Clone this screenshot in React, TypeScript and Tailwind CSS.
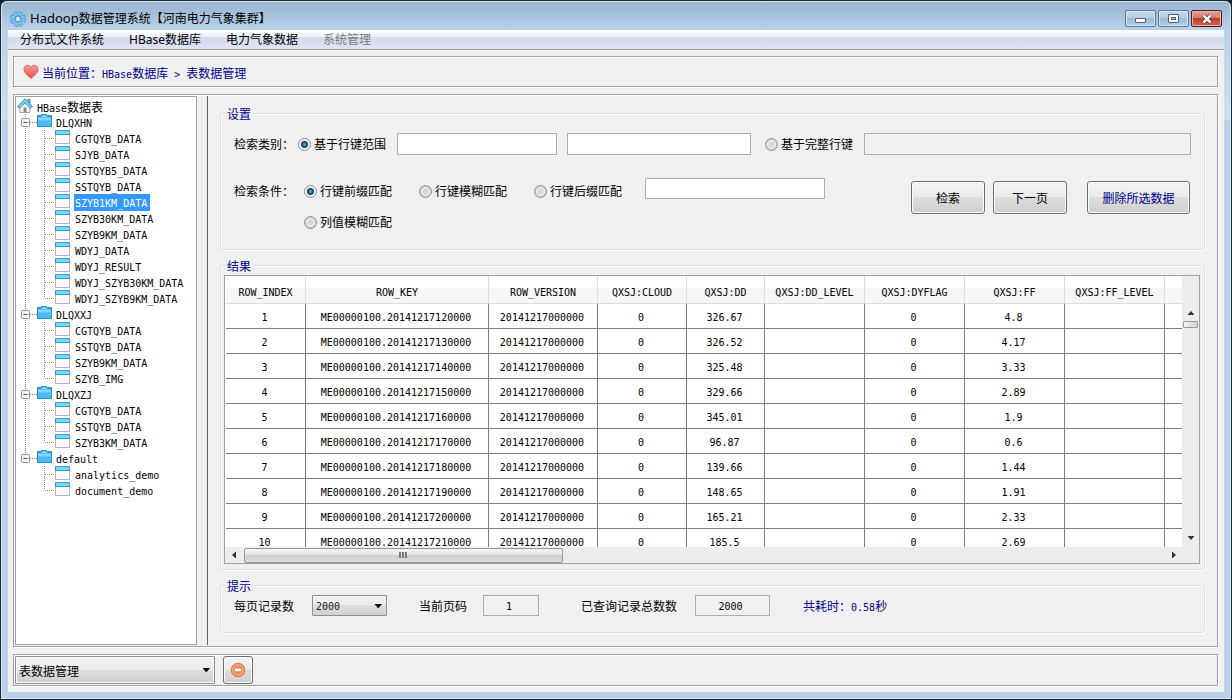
import React, { useState } from "react";

const CJK = "font-['Liberation_Sans','Noto_Sans_CJK_SC',sans-serif]";

function Mono({ children }: { children: React.ReactNode }) {
  return <span className="font-['DejaVu_Sans_Mono',monospace] text-[10px]">{children}</span>;
}

function GearIcon() {
  return (
    <svg width="16" height="16" viewBox="0 0 16 16" aria-hidden="true">
      <circle cx="8" cy="8" r="6.4" fill="none" stroke="#3d93cb" strokeWidth="3" strokeDasharray="3.2 1.83" />
      <circle cx="8" cy="8" r="5.8" fill="#7cc8ee" stroke="#3d93cb" strokeWidth="0.8" />
      <circle cx="8" cy="8" r="6" fill="none" stroke="#7cc8ee" strokeWidth="2.4" strokeDasharray="2.2 2.51" strokeDashoffset="-0.4" />
      <circle cx="8" cy="8" r="3.2" fill="#a9c3de" stroke="#2f86c2" strokeWidth="1" />
      <circle cx="8" cy="8" r="2" fill="#c9e4f5" />
    </svg>
  );
}

function HeartIcon() {
  return (
    <svg width="16" height="16" viewBox="0 0 16 16" aria-hidden="true">
      <defs>
        <linearGradient id="heart" x1="0" y1="0" x2="0" y2="1">
          <stop offset="0" stopColor="#fb9a94" />
          <stop offset="1" stopColor="#f04a4e" />
        </linearGradient>
      </defs>
      <path
        d="M8 14.6C6.6 12.4 1 9.8 1 5.2C1 2.8 2.7 1.3 4.6 1.3C6.2 1.3 7.4 2.2 8 3.5C8.6 2.2 9.8 1.3 11.4 1.3C13.3 1.3 15 2.8 15 5.2C15 9.8 9.4 12.4 8 14.6Z"
        fill="url(#heart)"
        stroke="#c4605e"
        strokeWidth="0.9"
      />
    </svg>
  );
}

function HouseIcon() {
  return (
    <svg width="16" height="16" viewBox="0 0 16 16" aria-hidden="true">
      <path d="M3 8V14.5H13V8L8 3Z" fill="#f4f4f4" stroke="#a8a8a8" strokeWidth="1" />
      <rect x="6.5" y="9.5" width="3" height="5" fill="#8b8f93" />
      <rect x="11" y="1.5" width="2" height="4" fill="#63bde8" stroke="#2b7fae" strokeWidth="0.7" />
      <path d="M8 0.8L15.4 8.4L13.6 10.2L8 4.8L2.4 10.2L0.6 8.4Z" fill="#7fd0f5" stroke="#2b7fae" strokeWidth="0.9" />
    </svg>
  );
}

function FolderIcon() {
  return (
    <svg width="15" height="14" viewBox="0 0 15 14" aria-hidden="true">
      <path d="M0.5 1.5H4.5V0.5H9.5L10.5 1.5H14.5V12.5H0.5Z" fill="#2f9fdc" stroke="#2a90cc" />
      <path d="M5 1.4H9.3L10.2 3H5Z" fill="#8fdcff" />
      <rect x="1" y="3.4" width="13" height="8.6" fill="#4fbaf2" />
      <rect x="1" y="3.4" width="13" height="3" fill="#7fd3fb" />
    </svg>
  );
}

function TableIcon() {
  return (
    <svg width="15" height="15" viewBox="0 0 15 15" aria-hidden="true">
      <rect x="0.5" y="0.5" width="14" height="13" fill="#fdfdfd" stroke="#b4b4b4" />
      <rect x="0" y="0" width="15" height="5" fill="#3a9fd0" />
      <rect x="1" y="1" width="13" height="3" fill="#7fd4fa" />
    </svg>
  );
}

const dotted = { stroke: "#8a8a8a", strokeDasharray: "1 1", fill: "none" };

function GroupBranch({ last }: { last: boolean }) {
  return (
    <svg width="21" height="16" viewBox="0 0 21 16" aria-hidden="true">
      <path d={last ? "M9.5 0V5" : "M9.5 0V16"} {...dotted} />
      <path d="M14 8.5H21" {...dotted} />
      <rect x="5.5" y="4.5" width="8" height="8" rx="1" fill="#f4f4f4" stroke="#919191" />
      <path d="M7.5 8.5H11.5" stroke="#3f4fa0" />
    </svg>
  );
}

function LeafBranch({ trunk, last }: { trunk: boolean; last: boolean }) {
  return (
    <svg width="39" height="16" viewBox="0 0 39 16" aria-hidden="true">
      {trunk && <path d="M9.5 0V16" {...dotted} />}
      <path d={last ? "M28.5 0V8" : "M28.5 0V16"} {...dotted} />
      <path d="M29 8.5H39" {...dotted} />
    </svg>
  );
}

const groups = [
  {
    name: "DLQXHN",
    tables: [
      "CGTQYB_DATA",
      "SJYB_DATA",
      "SSTQYB5_DATA",
      "SSTQYB_DATA",
      "SZYB1KM_DATA",
      "SZYB30KM_DATA",
      "SZYB9KM_DATA",
      "WDYJ_DATA",
      "WDYJ_RESULT",
      "WDYJ_SZYB30KM_DATA",
      "WDYJ_SZYB9KM_DATA",
    ],
  },
  { name: "DLQXXJ", tables: ["CGTQYB_DATA", "SSTQYB_DATA", "SZYB9KM_DATA", "SZYB_IMG"] },
  { name: "DLQXZJ", tables: ["CGTQYB_DATA", "SSTQYB_DATA", "SZYB3KM_DATA"] },
  { name: "default", tables: ["analytics_demo", "document_demo"] },
];

function Tree() {
  const [selected, setSelected] = useState("DLQXHN/SZYB1KM_DATA");
  return (
    <nav className="w-[182px] shrink-0 overflow-hidden border border-[#a0a0a0] bg-white pt-px text-xs text-black">
      <div className="flex h-4 items-start pl-px">
        <HouseIcon />
        <span className="ml-1 pt-0.5 leading-4">
          <Mono>HBase</Mono>数据表
        </span>
      </div>
      <ul>
        {groups.map((g, gi) => {
          const lastGroup = gi === groups.length - 1;
          return (
            <li key={g.name}>
              <div className="flex h-4 items-start">
                <GroupBranch last={lastGroup} />
                <FolderIcon />
                <span className="ml-1 pt-px leading-4">
                  <Mono>{g.name}</Mono>
                </span>
              </div>
              <ul>
                {g.tables.map((t, ti) => {
                  const id = g.name + "/" + t;
                  return (
                    <li key={t} className="flex h-4 items-start">
                      <LeafBranch trunk={!lastGroup} last={ti === g.tables.length - 1} />
                      <TableIcon />
                      <button
                        type="button"
                        onClick={() => setSelected(id)}
                        className={
                          id === selected
                            ? "ml-1 bg-[#3399ff] pt-0.5 pr-[3px] pl-px leading-[14px] text-white"
                            : "ml-1 pt-0.5 pr-[3px] pl-px leading-[14px]"
                        }
                      >
                        <Mono>{t}</Mono>
                      </button>
                    </li>
                  );
                })}
              </ul>
            </li>
          );
        })}
      </ul>
    </nav>
  );
}

function Radio({ name, label, checked }: { name: string; label: string; checked?: boolean }) {
  return (
    <label className="flex h-4 items-center gap-[3px] whitespace-nowrap">
      <input
        type="radio"
        name={name}
        defaultChecked={checked}
        className="size-[13px] shrink-0 appearance-none rounded-full border border-[#8e8f8f] bg-[radial-gradient(circle,#d4d6d9_0_2px,#eceded_4px,#c4c8cc_5px,#f4f4f4_6px)] checked:bg-[radial-gradient(circle,#6fb4d6_0,#25648a_2px,#123f5e_3px,#e6eaee_4px,#f4f4f4_6px)]"
      />
      <span className="pt-0.5">{label}</span>
    </label>
  );
}

const button =
  "h-[33px] rounded-[3px] border border-[#707070] bg-[linear-gradient(#f3f3f3,#ebebeb_50%,#dddddd_50%,#cfcfcf)] pt-0.5 text-center shadow-[inset_0_0_0_1px_#fbfbfb]";
const field = "border border-[#abadb3] bg-white px-1 outline-none";
const group =
  "min-w-0 rounded-[3px] border border-[#d5dfe5] px-[13px] shadow-[inset_1px_1px_0_#fff,1px_1px_0_#fff]";
const legend = "bg-[#f0f0f0] pt-[3px] pr-0.5 pl-px leading-[12px] text-[#00008b]";
const panel = "border border-[#a0a0a0] shadow-[inset_1px_1px_0_#fff,1px_1px_0_#fff]";

function SearchGroup() {
  return (
    <fieldset className={group + " h-36 shrink-0"}>
      <legend className={legend + " -ml-2"}>设置</legend>
      <div className="mt-3 flex items-center">
        <span className="mr-1 w-15 shrink-0 pt-0.5 whitespace-nowrap">检索类别：</span>
        <Radio name="category" label="基于行键范围" checked />
        <input aria-label="起始行键" className={field + " ml-[11px] h-[22px] w-40"} />
        <input aria-label="结束行键" className={field + " mr-3.5 ml-2.5 h-[22px] w-46"} />
        <Radio name="category" label="基于完整行键" />
        <input
          aria-label="完整行键"
          disabled
          className="ml-[11px] h-[22px] min-w-0 flex-1 border border-[#abadb3] bg-[#f0f0f0] px-1"
        />
      </div>
      <div className="mt-[23px] flex items-start">
        <span className="mt-[5px] mr-2.5 w-15 shrink-0 pt-px leading-4 whitespace-nowrap">检索条件：</span>
        <div className="mt-[5px] grid grid-cols-[115px_115px_auto] gap-y-[15px]">
          <Radio name="condition" label="行键前缀匹配" checked />
          <Radio name="condition" label="行键模糊匹配" />
          <Radio name="condition" label="行键后缀匹配" />
          <Radio name="condition" label="列值模糊匹配" />
        </div>
        <input aria-label="匹配内容" className={field + " ml-[23px] h-[21px] w-45"} />
        <div className="mt-[3px] mr-px ml-auto flex">
          <button type="button" className={button + " w-[74px]"}>检索</button>
          <button type="button" className={button + " ml-2 w-[74px]"}>下一页</button>
          <button type="button" className={button + " ml-5 w-[103px] text-[#00008b]"}>删除所选数据</button>
        </div>
      </div>
    </fieldset>
  );
}

const columns = [
  { name: "ROW_INDEX", width: "w-20" },
  { name: "ROW_KEY", width: "w-[183px]" },
  { name: "ROW_VERSION", width: "w-[109px]" },
  { name: "QXSJ:CLOUD", width: "w-[89px]" },
  { name: "QXSJ:DD", width: "w-[78px]" },
  { name: "QXSJ:DD_LEVEL", width: "w-[100px]" },
  { name: "QXSJ:DYFLAG", width: "w-[100px]" },
  { name: "QXSJ:FF", width: "w-[100px]" },
  { name: "QXSJ:FF_LEVEL", width: "w-[100px]" },
];

const readings = [
  ["12", "326.67", "4.8"],
  ["13", "326.52", "4.17"],
  ["14", "325.48", "3.33"],
  ["15", "329.66", "2.89"],
  ["16", "345.01", "1.9"],
  ["17", "96.87", "0.6"],
  ["18", "139.66", "1.44"],
  ["19", "148.65", "1.91"],
  ["20", "165.21", "2.33"],
  ["21", "185.5", "2.69"],
];

function ResultGroup() {
  return (
    <fieldset className="flex min-h-0 min-w-0 flex-1 flex-col rounded-[3px] border border-[#d5dfe5] pr-1 pb-[5px] pl-[3px] shadow-[inset_1px_1px_0_#fff,1px_1px_0_#fff]">
      <legend className={legend + " ml-0.5"}>结果</legend>
      <div className="mt-0.5 flex min-h-0 flex-1 border border-[#a0a0a0] bg-[#f0f0f0]">
        <div className="flex min-w-0 flex-1 flex-col">
          <div className="min-h-0 flex-1 overflow-hidden bg-white pl-px">
            <table className="w-full table-fixed border-separate border-spacing-0 text-center font-['DejaVu_Sans_Mono',monospace] text-[10px] text-black">
              <thead>
                <tr>
                  {columns.map((c) => (
                    <th
                      key={c.name}
                      className={
                        c.width +
                        " h-7 border-r border-b border-[#dcdee0] bg-[linear-gradient(#fff_40%,#f5f6f8_50%)] p-0 pt-1.5 font-normal"
                      }
                    >
                      {c.name}
                    </th>
                  ))}
                  <th className="border-b border-[#dcdee0] bg-[linear-gradient(#fff_40%,#f5f6f8_50%)] p-0" />
                </tr>
              </thead>
              <tbody>
                {readings.map(([hour, dd, ff], i) => (
                  <tr key={hour}>
                    {[
                      String(i + 1),
                      "ME00000100.20141217" + hour + "0000",
                      "20141217000000",
                      "0",
                      dd,
                      "",
                      "0",
                      ff,
                      "",
                    ].map((v, j) => (
                      <td key={j} className="h-[25px] border-r border-b border-[#808080] p-0 pt-1 pr-0.5">
                        {v}
                      </td>
                    ))}
                    <td className="border-b border-[#808080] p-0" />
                  </tr>
                ))}
              </tbody>
            </table>
          </div>
          <div className="flex h-4 shrink-0 items-center bg-[#ededed]">
            <svg width="19" height="16" viewBox="0 0 19 16" aria-hidden="true">
              <path d="M11 4.5V11.5L7 8Z" fill="#333" />
            </svg>
            <div className="flex h-[15px] w-1/3 items-center justify-center gap-px rounded-[2px] border border-[#979797] bg-[linear-gradient(#f5f5f5,#e6e6e8_50%,#cfd0d3_50%,#dcdcde)]">
              <span className="h-1.5 w-0.5 bg-[#777]" />
              <span className="h-1.5 w-0.5 bg-[#777]" />
              <span className="h-1.5 w-0.5 bg-[#777]" />
            </div>
            <svg className="ml-auto" width="16" height="16" viewBox="0 0 16 16" aria-hidden="true">
              <path d="M6 4.5V11.5L10 8Z" fill="#333" />
            </svg>
          </div>
        </div>
        <div className="flex w-[17px] shrink-0 flex-col items-center bg-[#ededed] pt-[29px] pb-4">
          <svg width="16" height="16" viewBox="0 0 16 16" aria-hidden="true">
            <path d="M4.5 10H11.5L8 6Z" fill="#333" />
          </svg>
          <div className="h-[7px] w-[15px] rounded-[1px] border border-[#979797] bg-[linear-gradient(90deg,#f5f5f5,#cfd0d3)]" />
          <svg className="mt-auto" width="16" height="16" viewBox="0 0 16 16" aria-hidden="true">
            <path d="M4.5 5H11.5L8 9Z" fill="#333" />
          </svg>
        </div>
      </div>
    </fieldset>
  );
}

function DownArrow() {
  return (
    <svg className="pointer-events-none absolute top-1/2 right-1 -translate-y-1/2" width="9" height="6" viewBox="0 0 9 6" aria-hidden="true">
      <path d="M0.5 1H8L4.25 5.3Z" fill="#000" />
    </svg>
  );
}

function StatusGroup() {
  const value =
    "h-[21px] border border-[#abadb3] bg-[#f0f0f0] pt-0.5 pr-1 text-center font-['DejaVu_Sans_Mono',monospace] text-[10px]";
  return (
    <fieldset className={group + " h-[55px] shrink-0"}>
      <legend className={legend + " -ml-2"}>提示</legend>
      <div className="mt-0.5 flex items-center whitespace-nowrap">
        <label htmlFor="page-size" className="pt-0.5">每页记录数</label>
        <div className="relative ml-[18px]">
          <select
            id="page-size"
            className="block h-[21px] w-[75px] appearance-none rounded-[1px] border border-[#8e8f8f] bg-[linear-gradient(#f3f3f3,#ebebeb_50%,#dddddd_50%,#d2d2d2)] pt-0.5 pl-[3px] font-['DejaVu_Sans_Mono',monospace] text-[10px] text-[#222]"
          >
            <option>2000</option>
          </select>
          <DownArrow />
        </div>
        <label htmlFor="page-no" className="ml-8 pt-0.5">当前页码</label>
        <input id="page-no" readOnly value="1" className={value + " ml-4 w-14"} />
        <label htmlFor="total" className="ml-[42px] pt-0.5">已查询记录总数数</label>
        <input id="total" readOnly value="2000" className={value + " ml-[18px] w-[75px]"} />
        <span className="ml-[33px] pt-0.5 text-[#00008b]">
          共耗时：<Mono>0.58</Mono>秒
        </span>
      </div>
    </fieldset>
  );
}

const caption =
  "flex h-[17px] w-[31px] items-center justify-center rounded-[2px] border border-[#5d7793] bg-[linear-gradient(#c3d6ea,#b5cce4_50%,#9db9d6_50%,#b4cde6)] shadow-[inset_0_0_0_1px_#d7e5f3]";

function TitleBar() {
  return (
    <header className="flex h-[29px] shrink-0 items-center px-0.5 pt-1.5 text-black">
      <GearIcon />
      <h1 className="ml-1 flex items-center text-xs whitespace-nowrap">
        <span className="font-['Noto_Sans','Noto_Sans_CJK_SC',sans-serif] text-[13px]">Hadoop</span>
        <span className="pt-px">数据管理系统【河南电力气象集群】</span>
      </h1>
      <div className="ml-auto flex gap-0.5">
        <button type="button" aria-label="最小化" className={caption}>
          <svg width="11" height="9" viewBox="0 0 11 9" aria-hidden="true">
            <rect x="0.5" y="4.5" width="10" height="4" rx="0.5" fill="#fff" stroke="#53616f" />
          </svg>
        </button>
        <button type="button" aria-label="最大化" className={caption}>
          <svg width="11" height="9" viewBox="0 0 11 9" aria-hidden="true">
            <rect x="0.5" y="0.5" width="10" height="8" rx="0.5" fill="#fff" stroke="#53616f" />
            <rect x="3.5" y="3.5" width="4" height="2" fill="#a9c3de" stroke="#53616f" />
          </svg>
        </button>
        <button
          type="button"
          aria-label="关闭"
          className="flex h-[17px] w-[31px] items-center justify-center rounded-[2px] border border-[#4c1a1a] bg-[linear-gradient(#dfa093,#d2796a_50%,#bc3b26_50%,#d0694f)] shadow-[inset_0_0_0_1px_#e8b5a8]"
        >
          <svg width="12" height="10" viewBox="0 0 12 10" aria-hidden="true">
            <path d="M2.5 1.5L9.5 8.5M9.5 1.5L2.5 8.5" stroke="#53505a" strokeWidth="4" />
            <path d="M2.5 1.5L9.5 8.5M9.5 1.5L2.5 8.5" stroke="#fff" strokeWidth="2.4" />
          </svg>
        </button>
      </div>
    </header>
  );
}

export default function App() {
  return (
    <div className={CJK + " h-screen bg-[#15202a] text-xs text-black"}>
      <div className="flex h-full flex-col rounded-t-[7px] border border-[#20282f] bg-[linear-gradient(#98b3d0,#bad2ea_30px,#cfdff0_119px,#b9d1ea_120px)] px-[7px] pb-[7px] shadow-[inset_0_0_0_1px_#d4e8f5]">
        <TitleBar />
        <div className="flex min-h-0 flex-1 flex-col bg-[#f0f0f0]">
          <nav className="flex h-5 shrink-0 items-center gap-[25px] border-b border-[#a0a0a0] bg-[linear-gradient(#ffffff,#eceff8_35%,#d4daed_40%,#dfe5f3)] pl-3 font-['Noto_Sans','Noto_Sans_CJK_SC',sans-serif] leading-4 whitespace-nowrap">
            <button type="button">分布式文件系统</button>
            <button type="button">HBase数据库</button>
            <button type="button">电力气象数据</button>
            <button type="button" disabled className="text-[#7a7a7a]">系统管理</button>
          </nav>
          <main className="flex min-h-0 flex-1 flex-col gap-[7px] pt-1.5 pr-1.5 pb-1.5 pl-[5px]">
            <div className={panel + " flex h-[31px] shrink-0 items-center gap-[3px] pl-[9px] text-[#00008b]"}>
              <HeartIcon />
              <span className="pt-1">
                当前位置：<Mono>HBase</Mono>数据库<Mono>{" > "}</Mono>表数据管理
              </span>
            </div>
            <div className={panel + " flex min-h-0 flex-1 p-px"}>
              <Tree />
              <div className="w-[11px] shrink-0 border-r border-[#646464]" />
              <div className="flex min-w-0 flex-1 flex-col gap-2 pt-2.5 pr-[11px] pb-3 pl-3">
                <SearchGroup />
                <ResultGroup />
                <StatusGroup />
              </div>
            </div>
            <div className={panel + " flex h-8 shrink-0 items-center pl-px"}>
              <div className="relative">
                <select
                  aria-label="当前窗口"
                  className="block h-7 w-50 appearance-none rounded-[1px] border border-[#8e8f8f] bg-[linear-gradient(#f3f3f3,#ebebeb_50%,#dddddd_50%,#cfcfcf)] pt-[3px] pl-[3px] shadow-[inset_0_0_0_1px_#fbfbfb]"
                >
                  <option>表数据管理</option>
                </select>
                <DownArrow />
              </div>
              <button
                type="button"
                aria-label="关闭当前窗口"
                className="ml-2 flex h-7 w-[30px] items-center justify-center rounded-[3px] border border-[#707070] bg-[linear-gradient(#f3f3f3,#ebebeb_50%,#dddddd_50%,#cfcfcf)] shadow-[inset_0_0_0_1px_#fbfbfb]"
              >
                <svg width="16" height="16" viewBox="0 0 16 16" aria-hidden="true">
                  <circle cx="8" cy="8" r="6.8" fill="#f08a55" stroke="#d0703c" strokeWidth="0.9" />
                  <circle cx="8" cy="8" r="5.2" fill="none" stroke="#fbc09c" strokeWidth="0.9" />
                  <rect x="5" y="6.6" width="6" height="2.6" fill="#fff" />
                </svg>
              </button>
            </div>
          </main>
        </div>
      </div>
    </div>
  );
}
